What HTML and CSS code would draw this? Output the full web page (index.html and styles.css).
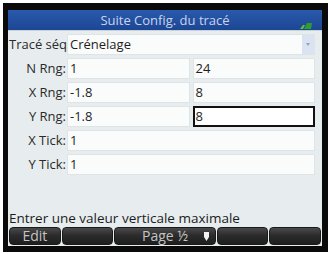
FILE: index.html
```html
<!DOCTYPE html>
<html lang="fr">
<head>
  <meta charset="UTF-8" />
  <meta name="viewport" content="width=device-width, initial-scale=1" />
  <title>Suite Config. du tracé</title>
  <link rel="stylesheet" href="styles.css">
</head>
<body>

  <div class="device">
    <div class="screen">

      <header class="title-bar">
        <span class="title">Suite Config. du tracé</span>
        <svg class="status" width="12" height="7" viewBox="0 0 12 7" aria-hidden="true">
          <polygon points="0,7 3,3 5,3 3,7" fill="#5fbf3a" />
          <polygon points="4,7 7,1 12,1 11,7" fill="#2f9e2a" />
        </svg>
      </header>

      <div class="form">
        <div class="row">
          <span class="label label-left">Tracé séq</span>
          <div class="field select">
            <span class="value">Crénelage</span>
            <span class="arrow"></span>
          </div>
        </div>

        <div class="row">
          <span class="label">N Rng:</span>
          <div class="pair">
            <div class="field">1</div>
            <div class="field">24</div>
          </div>
        </div>

        <div class="row">
          <span class="label">X Rng:</span>
          <div class="pair">
            <div class="field">-1.8</div>
            <div class="field">8</div>
          </div>
        </div>

        <div class="row">
          <span class="label">Y Rng:</span>
          <div class="pair">
            <div class="field">-1.8</div>
            <div class="field active">8</div>
          </div>
        </div>

        <div class="row">
          <span class="label">X Tick:</span>
          <div class="field">1</div>
        </div>

        <div class="row">
          <span class="label">Y Tick:</span>
          <div class="field">1</div>
        </div>
      </div>

      <p class="hint">Entrer une valeur verticale maximale</p>

      <nav class="menu">
        <button class="key">Edit</button>
        <button class="key"></button>
        <button class="key key-wide">Page ½
          <svg class="marker" width="5" height="9" viewBox="0 0 5 9" aria-hidden="true">
            <polygon points="0,0 5,0 5,5 2.5,9 0,5" fill="#f4f4f4" />
          </svg>
        </button>
        <button class="key"></button>
        <button class="key"></button>
      </nav>

    </div>
  </div>

</body>
</html>
```

FILE: styles.css
```css
* {
  margin: 0; padding: 0; box-sizing: border-box;
}
body {
  font-family: 'Open Sans', 'DejaVu Sans', sans-serif;
  background-color: #fff;
  color: #222;
  padding: 3px 0 0 3px;
}
.device {
  width: 325px;
  height: 249px;
  border-style: solid;
  border-color: #0a0a0a;
  border-width: 7px 6px 6px 5px;
}
.screen {
  height: 236px;
  background-color: #e7edee;
  display: flex;
  flex-direction: column;
}

/* title bar */
.title-bar {
  position: relative;
  height: 21px;
  background: linear-gradient(#2a5aad, #1c4692);
  border-bottom: 1px solid #c9d3da;
  display: flex;
  justify-content: center;
  align-items: center;
}
.title {
  font-size: 13px;
  color: #c9d3ef;
  line-height: 20px;
}
.status {
  position: absolute;
  right: 10px;
  top: 12px;
}

/* form rows */
.form {
  display: flex;
  flex-direction: column;
  gap: 3px;
  padding: 3px 7px 0 0;
}
.row {
  display: flex;
  height: 21px;
  align-items: stretch;
}
.label {
  width: 59px;
  flex-shrink: 0;
  font-size: 13px;
  line-height: 21px;
  text-align: right;
  padding-right: 1px;
  white-space: nowrap;
  color: #2a2a2a;
}
.label-left {
  text-align: left;
  padding: 0 0 0 1px;
  overflow: hidden;
}
.field {
  flex: 1;
  background-color: #fafbfb;
  border: 1px solid #dfe5e6;
  font-size: 13px;
  line-height: 19px;
  padding-left: 2px;
  color: #1e1e1e;
  white-space: nowrap;
}
.field.active {
  background-color: #fff;
  border: 2px solid #111;
  line-height: 17px;
  padding-left: 1px;
}
.pair {
  flex: 1;
  display: grid;
  grid-template-columns: 1fr 1fr;
  gap: 3px;
}
.select {
  display: flex;
  padding-right: 0;
}
.select .value {
  flex: 1;
}
.arrow {
  width: 12px;
  background-color: #d9e3f1;
  display: flex;
  align-items: center;
  justify-content: center;
}
.arrow::after {
  content: '';
  border-left: 2.5px solid transparent;
  border-right: 2.5px solid transparent;
  border-top: 3px solid #9aa3ad;
}

/* hint + soft keys */
.hint {
  margin-top: auto;
  font-size: 13.5px;
  line-height: 16px;
  padding-left: 1px;
  color: #1c1c1c;
}
.menu {
  display: flex;
  gap: 1px;
  height: 20px;
  padding: 1px;
}
.key {
  flex: 1;
  border: 1px solid #1a1a1a;
  border-radius: 4px;
  background: linear-gradient(#4a4a4a, #2c2c2c 45%, #1e1e1e);
  color: #c4c4c4;
  font-family: 'Open Sans', 'DejaVu Sans', sans-serif;
  font-size: 14px;
  line-height: 16px;
  display: flex;
  align-items: center;
  justify-content: center;
}
.key-wide {
  flex: 2;
  position: relative;
}
.marker {
  position: absolute;
  right: 6px;
  top: 4px;
}
```
